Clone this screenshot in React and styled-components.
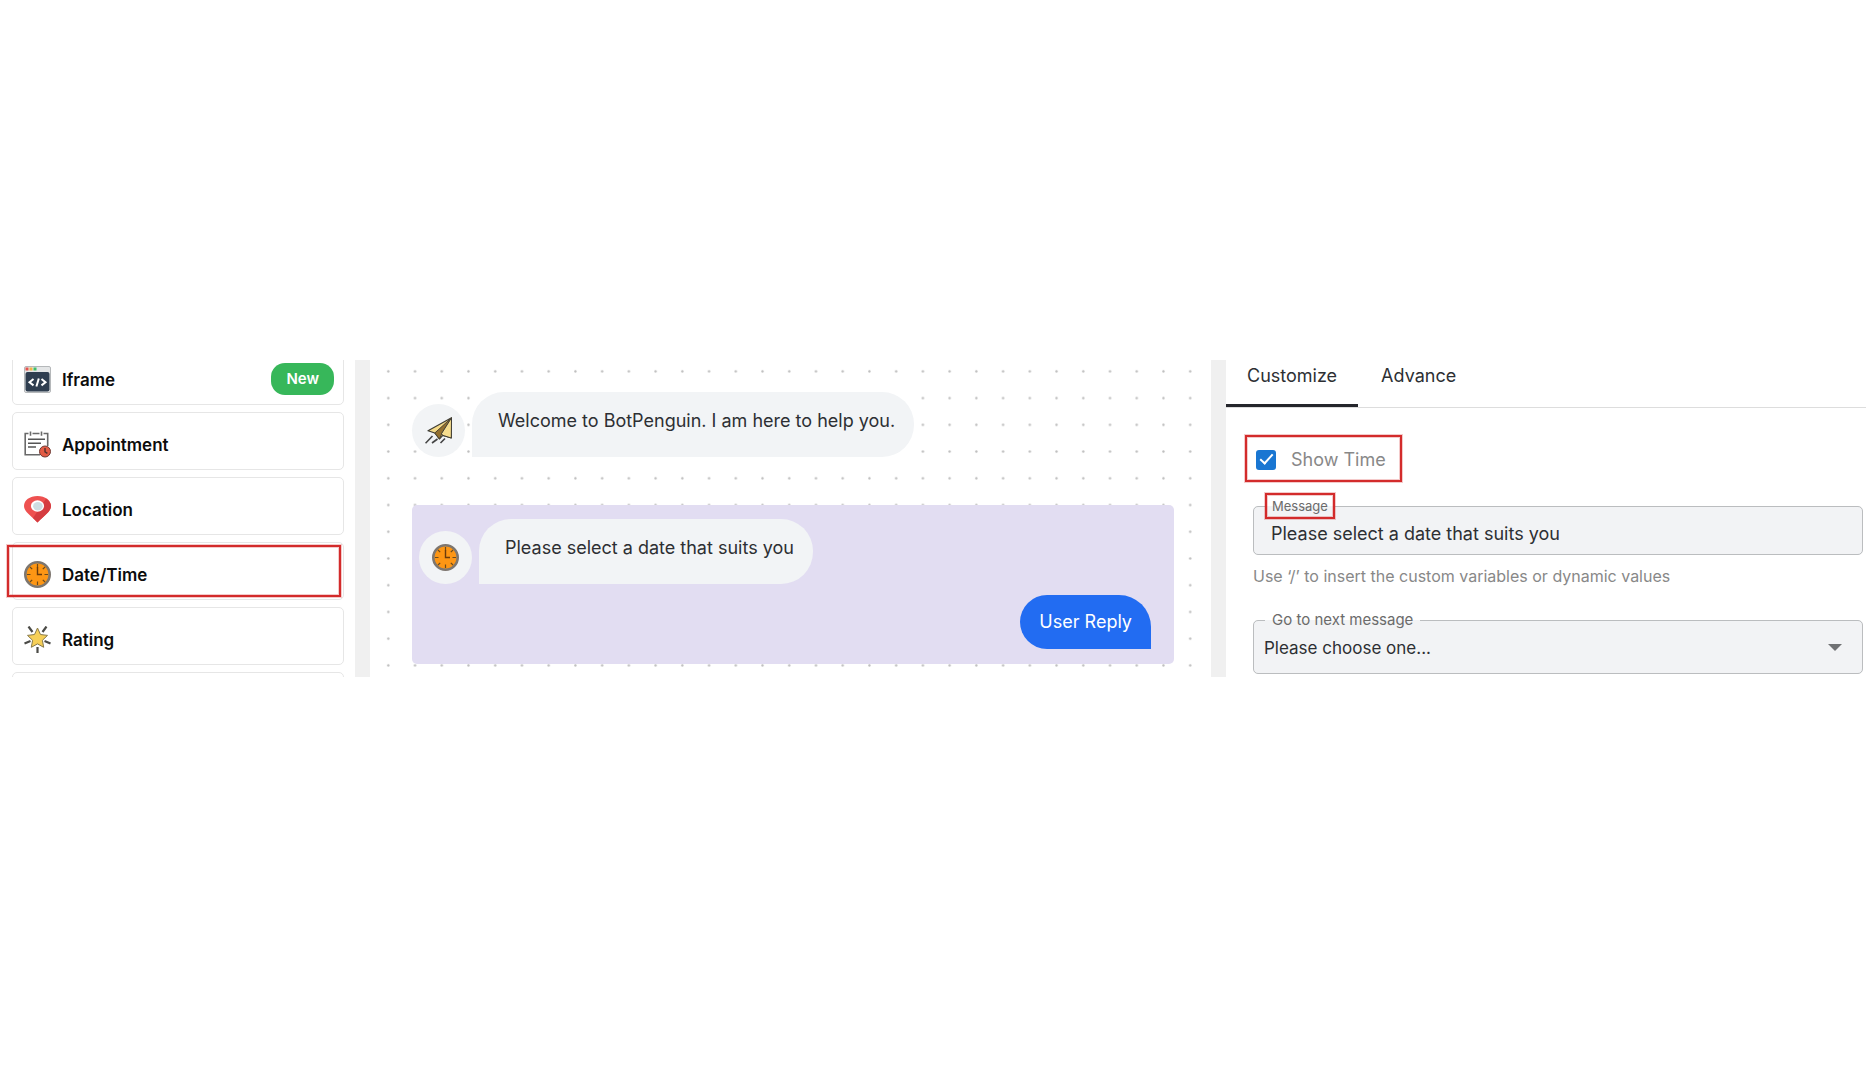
import React, { useState } from "react";
import styled, { createGlobalStyle } from "styled-components";

const GlobalStyle = createGlobalStyle`
  *, *::before, *::after { box-sizing: border-box; }
  body {
    margin: 0;
    background: #fff;
    color: #2d2f33;
    font-family: Inter, "Liberation Sans", sans-serif;
    font-size: 18px;
    line-height: 24px;
  }
  button, input, select { font: inherit; color: inherit; }
`;

const Page = styled.main`
  padding-top: 360px;
`;

const Builder = styled.div`
  display: grid;
  grid-template-columns: 355px 15px minmax(0, 1fr) 15px minmax(0, 640px);
`;

const Gutter = styled.div`
  background: #f0f0f0;
`;

/* ---------- component list ---------- */

const Sidebar = styled.nav`
  contain: size;
  overflow: hidden;
  padding: 0 11px 0 12px;
`;

const ItemList = styled.ul`
  display: flex;
  flex-direction: column;
  gap: 7px;
  margin: -13px 0 0;
  padding: 0;
  list-style: none;
`;

const Item = styled.li`
  position: relative;
`;

const ItemButton = styled.button`
  display: flex;
  align-items: center;
  gap: 11px;
  width: 100%;
  height: 58px;
  padding: 7px 9px 0 11px;
  border: 1px solid #e6e6e6;
  border-radius: 5px;
  background: #fff;
  color: #0c0c0c;
  font-weight: 600;
  font-size: 17px;
  text-align: left;

  svg { flex: none; width: 27px; height: 27px; }
`;

const Badge = styled.span`
  margin: -2px 0 0 auto;
  padding: 4px 15px;
  border-radius: 14px;
  background: #37b75a;
  color: #fff;
  font-size: 15px;
`;

const mark = "2px solid #d32b2b";
const markGlow = "0 0 0 1px rgba(211, 43, 43, 0.25), inset 0 0 0 1px rgba(211, 43, 43, 0.25)";

const ItemMark = styled.span`
  position: absolute;
  inset: 3px 3px 3px -5px;
  border: ${mark};
  box-shadow: ${markGlow};
  pointer-events: none;
`;

/* ---------- conversation canvas ---------- */

const Canvas = styled.section`
  position: relative;
  padding: 32px 37px 12px 42px;
`;

const Dots = styled.svg`
  position: absolute;
  inset: 0;
  width: 100%;
  height: 100%;
`;

const Row = styled.div`
  position: relative;
  display: flex;
  align-items: flex-end;
  gap: 7px;
`;

const Avatar = styled.span`
  display: grid;
  place-items: center;
  width: 53px;
  height: 53px;
  border-radius: 50%;
  background: #f2f4f6;

  svg { width: 27px; height: 27px; }
`;

const Bubble = styled.p`
  margin: 0;
  padding: 17px 19px 24px 26px;
  border-radius: 32px 32px 32px 0;
  background: #f2f4f6;
`;

const Selected = styled.div`
  position: relative;
  display: flex;
  flex-direction: column;
  gap: 11px;
  margin-top: 48px;
  padding: 14px 23px 15px 7px;
  border-radius: 5px;
  background: #e2ddf2;
`;

const Reply = styled.p`
  align-self: flex-end;
  margin: 0;
  padding: 15px 19px;
  border-radius: 27px 32px 0 27px;
  background: #226cf2;
  color: #fff;
`;

/* ---------- settings panel ---------- */

const Settings = styled.section`
  padding-bottom: 3px;
`;

const Tabs = styled.div`
  display: flex;
  gap: 2px;
  height: 48px;
  border-bottom: 1px solid #ddd;
`;

const Tab = styled.button`
  height: 47px;
  padding: 0 21px 12px;
  border: 0;
  border-bottom: 3px solid ${(p) => (p.$active ? "#25262c" : "transparent")};
  background: none;
`;

const Form = styled.form`
  display: flex;
  flex-direction: column;
  align-items: flex-start;
  padding: 27px 3px 0 19px;
`;

const CheckMark = styled.span`
  display: flex;
  align-items: center;
  gap: 15px;
  height: 47px;
  padding: 2px 14px 0 9px;
  border: ${mark};
  box-shadow: ${markGlow};
  color: #888;
`;

const Checkbox = styled.input`
  appearance: none;
  flex: none;
  width: 20px;
  height: 20px;
  margin: 0;
  border: 2px solid #888;
  border-radius: 3px;

  &:checked {
    border: 0;
    background: #1976d2;
  }

  &:checked::after {
    content: "";
    display: block;
    width: 7px;
    height: 13px;
    margin: 1px 0 0 7px;
    border: solid #fff;
    border-width: 0 2px 2px 0;
    transform: rotate(42deg);
  }
`;

const Fields = styled.div`
  width: 100%;
  padding-left: 8px;
`;

const Field = styled.fieldset`
  position: relative;
  min-width: 0;
  margin: ${(p) => p.$top}px 0 0;
  padding: 0 ${(p) => p.$pad}px;
  border: 1px solid #bbbdbf;
  border-radius: 5px;
  background: #f2f3f5;
`;

const Legend = styled.legend`
  margin-left: ${(p) => p.$indent}px;
  padding: 0 ${(p) => (p.$marked ? 5 : 7)}px;
  border: ${(p) => (p.$marked ? mark : "0")};
  box-shadow: ${(p) => (p.$marked ? markGlow : "none")};
  color: #6b6b6b;
  font-size: ${(p) => (p.$marked ? 13 : 15)}px;
  line-height: ${(p) => (p.$marked ? 22 : 24)}px;
`;

const TextInput = styled.input`
  display: block;
  width: 100%;
  height: 35px;
  padding: 0 0 7px;
  border: 0;
  outline: 0;
  background: none;
`;

const Select = styled.select`
  display: block;
  appearance: none;
  width: 100%;
  height: 41px;
  padding: 0 0 10px;
  border: 0;
  outline: 0;
  background: none;
  font-size: 17px;
`;

const Arrow = styled.svg`
  position: absolute;
  right: 20px;
  bottom: 22px;
  width: 14px;
  height: 7px;
  pointer-events: none;
`;

const Hint = styled.p`
  margin: 9px 0 0;
  color: #888;
  font-size: 16px;
`;

/* ---------- icons ---------- */

const IframeIcon = () => (
  <svg viewBox="0 0 27 27" aria-hidden="true">
    <rect x="0.5" y="0.5" width="26" height="26" rx="1.5" fill="#e4e6e7" stroke="#b5b8ba" />
    <rect x="1.5" y="1.5" width="3" height="3" fill="#e6534d" />
    <rect x="5.5" y="1.5" width="3" height="3" fill="#f2b544" />
    <rect x="9.5" y="1.5" width="3" height="3" fill="#3fbf68" />
    <rect x="1.5" y="6" width="24" height="19.5" rx="2" fill="#2f3e50" />
    <path d="M9.500 13 5.500 16.200l4 3.200M17.500 13l4 3.200-4 3.200M14.800 12.500l-2.400 8" fill="none" stroke="#fff" strokeWidth="2" />
  </svg>
);

const AppointmentIcon = () => (
  <svg viewBox="0 0 27 27" aria-hidden="true">
    <path d="M4.500 2.500H1.200v21.300H16M8.500 2.500h7M19.500 2.500h4.200V15" fill="none" stroke="#6a6a6a" strokeWidth="1.600" />
    <path d="M6.500 0.500v4.300M17.500 0.500v4.300" stroke="#6a6a6a" strokeWidth="1.600" />
    <path d="M4 8.300h17M4 12.300h13M4 16h8" stroke="#555" strokeWidth="1.600" />
    <circle cx="21" cy="20.500" r="5.500" fill="#e35b44" stroke="#6e3c36" />
    <path d="M21 17v3.800l2.400 1.600" fill="none" stroke="#51302d" strokeWidth="1.400" />
  </svg>
);

const LocationIcon = () => (
  <svg viewBox="0 0 27 27" aria-hidden="true">
    <path d="M13.5 0C5.8 0 0 4.3 0 10.1c0 4.6 4.3 7.6 13.5 16.4C22.700 17.700 27 14.700 27 10.100 27 4.300 21.200 0 13.500 0Z" fill="#ee5150" />
    <path d="M22 2.700c3 1.700 5 4.300 5 7.400 0 4.600-4.300 7.600-13.500 16.400L9 22Z" fill="#d53c40" />
    <ellipse cx="13.500" cy="10" rx="6.600" ry="5.700" fill="#fff" />
    <ellipse cx="13.900" cy="10.300" rx="4.800" ry="4.200" fill="#cfdde2" />
  </svg>
);

const ClockIcon = () => (
  <svg viewBox="0 0 27 27" aria-hidden="true">
    <circle cx="13.5" cy="13.5" r="12.200" fill="#fd9614" stroke="#7d766f" strokeWidth="2.600" />
    <path
      d="M13.500 3v3.500M13.500 20.500V24M3 13.500h3.500M20.500 13.500H24M6 6l2.200 2.200M21 6l-2.200 2.200M6 21l2.200-2.200M21 21l-2.200-2.200"
      stroke="#6b4a1c"
      strokeWidth="1.200"
    />
    <path d="M13.500 6v7.500h4.500" fill="none" stroke="#6a3b0c" strokeWidth="1.400" />
  </svg>
);

const RatingIcon = () => (
  <svg viewBox="0 0 27 27" aria-hidden="true">
    <path d="M4.500 0.500l4 5.500M22.500 0.500l-4 5.500M0.500 17.500l6-2.500M26.500 17.500l-6-2.500M13.500 21v6" stroke="#4b4b47" strokeWidth="2.200" />
    <path d="M13.500 2l3 6.500 7 0.900-5.100 4.900 1.300 7-6.200-3.400-6.200 3.400 1.300-7-5.100-4.900 7-0.900Z" fill="#f6cf57" stroke="#87794b" />
  </svg>
);

const PlaneIcon = () => (
  <svg viewBox="0 0 27 27" aria-hidden="true">
    <path d="M26.500 0.800 3 13.800l6.800 2.200 4.600 6 3.400-3.600 8.500 2.600Z" fill="#f4d987" stroke="#3f3d35" strokeWidth="1.200" strokeLinejoin="round" />
    <path d="M26.500 0.800 9.800 16l4.600 6 2.400-5.200Z" fill="#94702f" stroke="#4c4432" strokeLinejoin="round" />
    <path d="M26.500 0.800 16.400 16.800l1.600 1.600 8.300 2.600Z" fill="#f6dd8e" stroke="#3f3d35" strokeLinejoin="round" />
    <path d="M7.500 19 0.500 26.300M12.500 22 7 26M20 21.500l-4.500 4.500" stroke="#444" strokeWidth="1.600" />
  </svg>
);

const items = [
  { name: "Iframe", Icon: IframeIcon, badge: "New" },
  { name: "Appointment", Icon: AppointmentIcon },
  { name: "Location", Icon: LocationIcon },
  { name: "Date/Time", Icon: ClockIcon, marked: true },
  { name: "Rating", Icon: RatingIcon },
];

export default function App() {
  const [tab, setTab] = useState("Customize");
  const [message, setMessage] = useState("Please select a date that suits you");
  const [showTime, setShowTime] = useState(true);

  return (
    <Page>
      <GlobalStyle />
      <Builder>
        <Sidebar aria-label="Components">
          <ItemList>
            {items.map(({ name, Icon, badge, marked }) => (
              <Item key={name}>
                <ItemButton type="button">
                  <Icon />
                  {name}
                  {badge && <Badge>{badge}</Badge>}
                </ItemButton>
                {marked && <ItemMark />}
              </Item>
            ))}
            <Item>
              <ItemButton as="div" />
            </Item>
          </ItemList>
        </Sidebar>
        <Gutter />
        <Canvas>
          <Dots aria-hidden="true">
            <defs>
              <pattern id="dots" x="5" y="-2" width="26.730" height="26.730" patternUnits="userSpaceOnUse">
                <circle cx="13.300" cy="13.300" r="1.200" fill="#bdbdbd" />
              </pattern>
            </defs>
            <rect x="5" width="825" height="100%" fill="url(#dots)" />
          </Dots>
          <Row>
            <Avatar><PlaneIcon /></Avatar>
            <Bubble>Welcome to BotPenguin. I am here to help you.</Bubble>
          </Row>
          <Selected>
            <Row>
              <Avatar><ClockIcon /></Avatar>
              <Bubble>{message}</Bubble>
            </Row>
            <Reply>User Reply</Reply>
          </Selected>
        </Canvas>
        <Gutter />
        <Settings>
          <Tabs role="tablist">
            {["Customize", "Advance"].map((name) => (
              <Tab
                key={name}
                type="button"
                role="tab"
                aria-selected={tab === name}
                $active={tab === name}
                onClick={() => setTab(name)}
              >
                {name}
              </Tab>
            ))}
          </Tabs>
          <Form>
            <CheckMark>
              <Checkbox
                id="show-time"
                type="checkbox"
                checked={showTime}
                onChange={(e) => setShowTime(e.target.checked)}
              />
              <label htmlFor="show-time">Show Time</label>
            </CheckMark>
            <Fields>
              <Field $top={11} $pad={17}>
                <Legend $marked $indent={-6}>
                  <label htmlFor="message">Message</label>
                </Legend>
                <TextInput
                  id="message"
                  type="text"
                  value={message}
                  onChange={(e) => setMessage(e.target.value)}
                />
              </Field>
              <Hint>Use ‘/’ to insert the custom variables or dynamic values</Hint>
              <Field $top={20} $pad={10}>
                <Legend $indent={1}>
                  <label htmlFor="next">Go to next message</label>
                </Legend>
                <Select id="next" defaultValue="">
                  <option value="">Please choose one...</option>
                </Select>
                <Arrow viewBox="0 0 14 7" aria-hidden="true">
                  <path d="M0 0h14L7 7Z" fill="#707274" />
                </Arrow>
              </Field>
            </Fields>
          </Form>
        </Settings>
      </Builder>
    </Page>
  );
}
